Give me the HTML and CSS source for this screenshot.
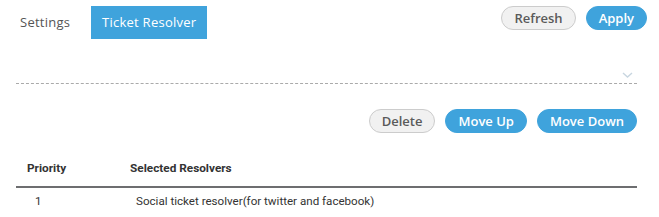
FILE: index.html
```html
<!DOCTYPE html>
<html>
<head>
<meta charset="utf-8">
<link rel="stylesheet" href="styles.css">
</head>
<body>
<div class="page">
  <div class="topbar">
    <div class="tabs">
      <div class="tab">Settings</div>
      <div class="tab active">Ticket Resolver</div>
    </div>
    <div class="actions">
      <button class="btn btn-light">Refresh</button>
      <button class="btn btn-primary">Apply</button>
    </div>
  </div>
  <div class="main">
    <div class="select">
      <svg class="chev" width="11" height="6" viewBox="0 0 11 6"><path d="M1 1 L5.5 5 L10 1" fill="none" stroke="#c8d6e0" stroke-width="1.4"/></svg>
    </div>
    <div class="toolbar">
      <button class="btn btn-light">Delete</button>
      <button class="btn btn-primary">Move Up</button>
      <button class="btn btn-primary">Move Down</button>
    </div>
    <table class="grid">
      <thead>
        <tr><th class="c1">Priority</th><th class="c2">Selected Resolvers</th></tr>
      </thead>
      <tbody>
        <tr><td class="c1">1</td><td class="c2">Social ticket resolver(for twitter and facebook)</td></tr>
      </tbody>
    </table>
  </div>
</div>
</body>
</html>
```

FILE: styles.css
```css
* { box-sizing: border-box; }
html, body { margin: 0; padding: 0; background: #fff; }
body { font-family: "Open Sans", sans-serif; }
.page { width: 659px; height: 217px; overflow: hidden; }
.topbar {
  display: flex;
  justify-content: space-between;
  align-items: flex-start;
  padding: 6px 12px 0 9px;
}
.tabs { display: flex; gap: 0; }
.tab {
  height: 33px;
  line-height: 33px;
  padding: 0 11px;
  font-size: 13px;
  color: #555;
  letter-spacing: 0.25px;
  white-space: nowrap;
}
.tab.active {
  background: #3fa3dc;
  color: #fff;
  margin-left: 10px;
  padding: 0;
  width: 116px;
  text-align: center;
}
.actions { display: flex; gap: 10px; }
.btn {
  font-family: "Open Sans", sans-serif;
  font-size: 13px;
  font-weight: 600;
  height: 24px;
  padding: 0 12px;
  border-radius: 12px;
  border: 1px solid #3fa3dc;
  background: #3fa3dc;
  color: #fff;
  line-height: 22px;
  white-space: nowrap;
  cursor: pointer;
}
.btn-light {
  background: #f1f1f1;
  border-color: #cccccc;
  color: #5a5a5a;
}
.main { padding: 0 22px 0 16px; }
.select {
  height: 45px;
  border-bottom: 1px dashed #aaaaaa;
  display: flex;
  justify-content: flex-end;
  align-items: flex-end;
  padding: 0 4px 5px 0;
}
.chev { display: block; }
.toolbar {
  display: flex;
  justify-content: flex-end;
  gap: 10px;
  margin-top: 25px;
}
.grid {
  width: 100%;
  border-collapse: collapse;
  margin-top: 17px;
  font-family: Roboto, sans-serif;
  font-size: 11.6px;
}
.grid th {
  text-align: left;
  font-weight: 700;
  color: #333;
  height: 37px;
  font-size: 11.8px;
  border-bottom: 2px solid #6d6e70;
  padding: 0;
}
.grid td { color: #333; height: 27px; padding: 0; vertical-align: middle; }
.grid th.c1 { padding-left: 11px; width: 114px; }
.grid td.c1 { padding-left: 19px; }
.grid td.c2 { padding-left: 6px; }
```
